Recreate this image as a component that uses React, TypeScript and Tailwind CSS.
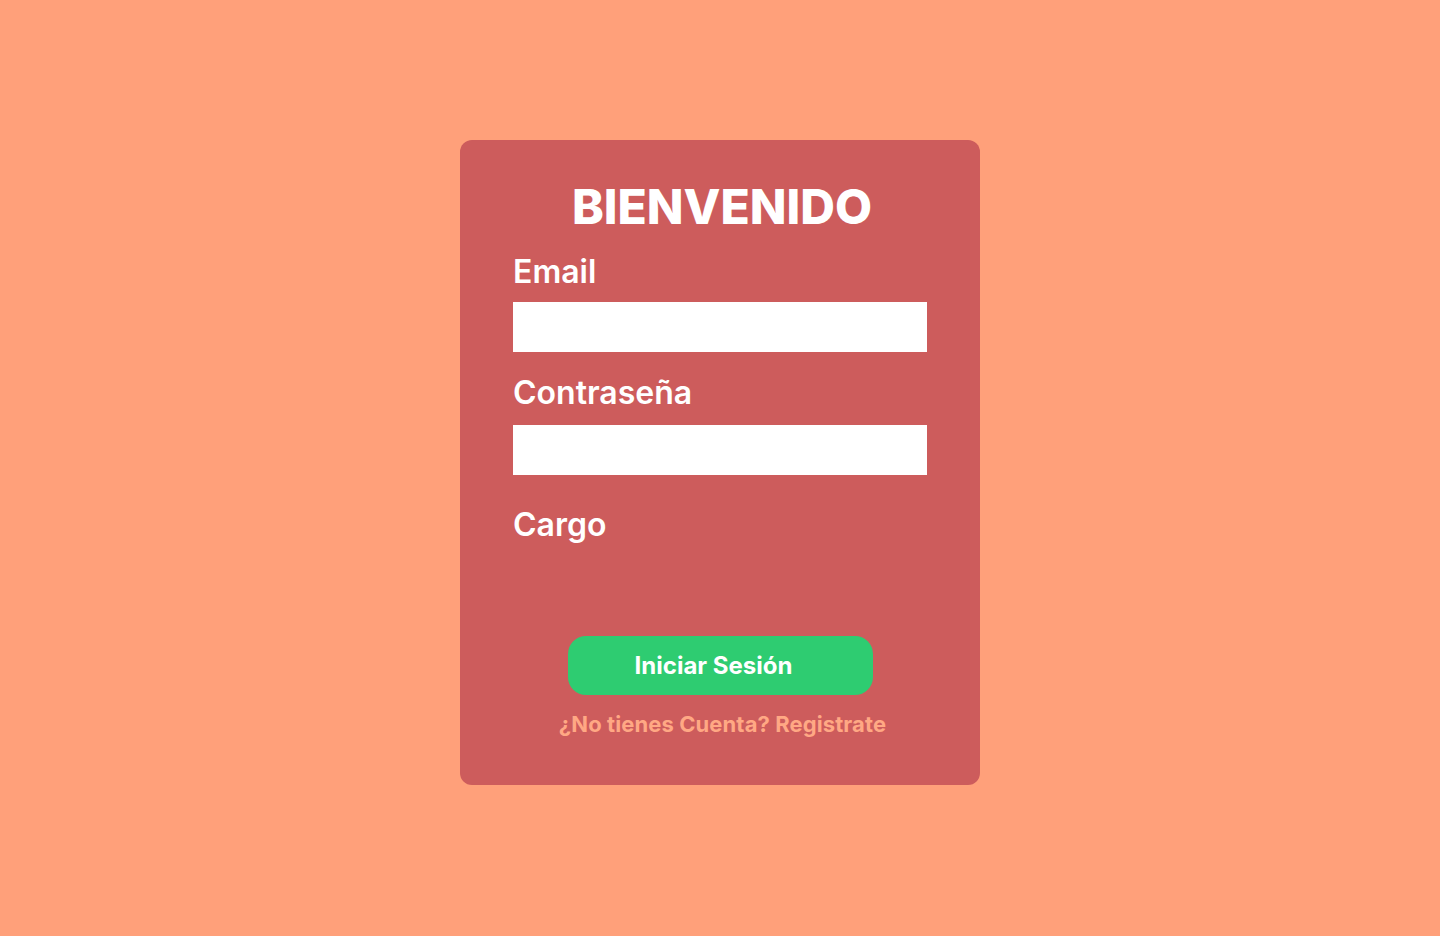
import React from "react";

const App = () => {
  return (
    <div className="min-h-screen w-full bg-[#FFA07A] flex justify-center pt-[140px] font-['Inter',sans-serif]">
      <div className="w-[520px] h-[645px] bg-[#CD5C5C] rounded-[12px] flex flex-col pt-[38px] px-[53px]">
        <h1 className="text-[48px] leading-[58px] font-extrabold text-white text-center pl-[4px]">
          BIENVENIDO
        </h1>

        <label className="mt-[17px] text-[32px] leading-[38px] font-semibold text-white">Email</label>
        <input type="email" className="mt-[11px] w-full h-[50px] bg-white outline-none" />

        <label className="mt-[22px] text-[32px] leading-[38px] font-semibold text-white">Contraseña</label>
        <input type="password" className="mt-[13px] w-full h-[50px] bg-white outline-none" />

        <label className="mt-[31px] text-[32px] leading-[38px] font-semibold text-white">Cargo</label>

        <div className="mt-[92px] flex justify-center">
          <button className="w-[305px] h-[59px] rounded-[18px] bg-[#2ECC71] text-white text-[24px] font-bold pr-[13px]">
            Iniciar Sesión
          </button>
        </div>

        <a className="mt-[16px] text-center text-[22px] leading-[26px] font-bold text-[#FFA884] pl-[5px] tracking-[0.1px]">
          ¿No tienes Cuenta? Registrate
        </a>
      </div>
    </div>
  );
};

export default App;
